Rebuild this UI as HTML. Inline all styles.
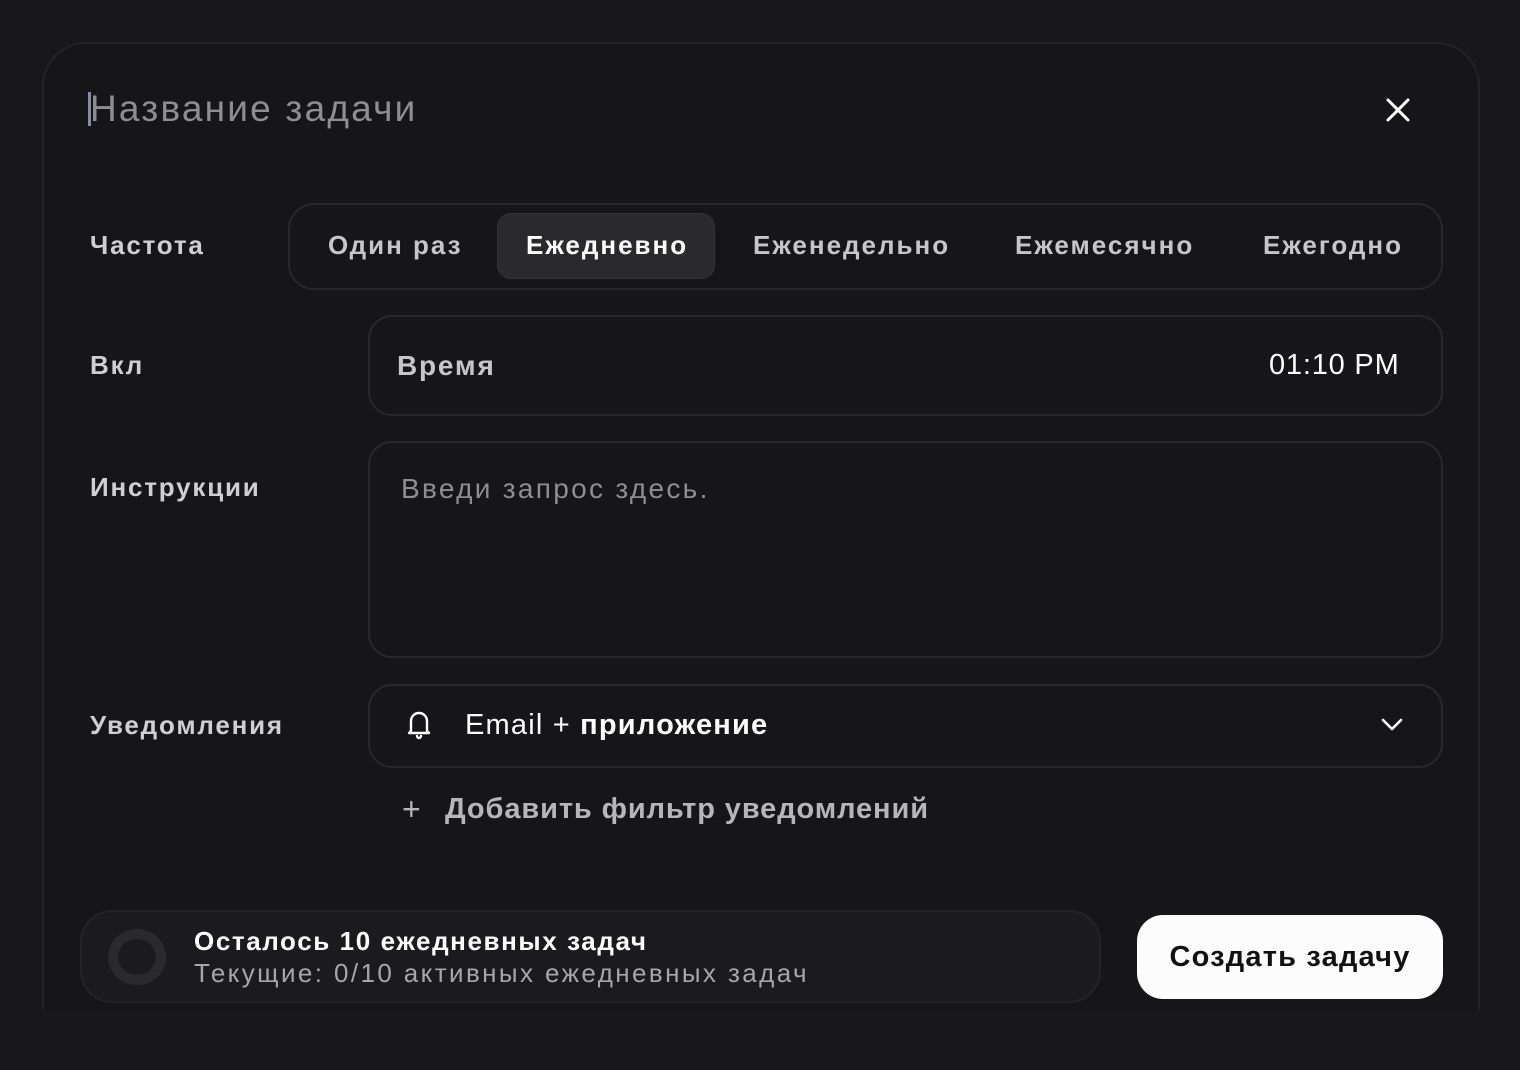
<!DOCTYPE html>
<html><head><meta charset="utf-8"><style>
*{margin:0;padding:0;box-sizing:border-box}
body{width:1520px;height:1070px;background:#18181a;font-family:"Liberation Sans","DejaVu Sans",sans-serif;position:relative;overflow:hidden;color:#e6e6e8}
.panel{position:absolute;left:42px;top:42px;width:1438px;height:1010px;background:#161618;border:2px solid #232326;border-radius:44px}
.clip{position:absolute;left:0;top:1010px;width:1520px;height:60px;background:#18181a}
.abs{position:absolute;white-space:nowrap}
.lbl{position:absolute;left:90px;font-size:26px;font-weight:bold;color:#cfcfd3;letter-spacing:1.8px}
.box{position:absolute;border:2px solid #28282b;border-radius:24px;background:#161618}
.tab{position:absolute;top:230px;font-size:26px;font-weight:bold;color:#c6c6ca;letter-spacing:2px}
</style></head><body>
<div class="panel"></div>
<div class="abs" style="left:88px;top:92px;width:3px;height:34px;background:#8a8aa0"></div>
<div class="abs" style="left:90px;top:88px;font-size:37px;color:#8e8e92;letter-spacing:2.2px">Название задачи</div>
<svg class="abs" style="left:1385px;top:97px" width="26" height="26" viewBox="0 0 26 26"><path d="M3 3L23 23M23 3L3 23" stroke="#fff" stroke-width="3" stroke-linecap="round"/></svg>

<div class="lbl" style="top:230px">Частота</div>
<div class="box" style="left:288px;top:203px;width:1155px;height:87px;border-radius:26px"></div>
<div class="abs" style="left:497px;top:213px;width:218px;height:66px;background:#2a2a2d;border:1px solid #333336;border-radius:14px"></div>
<div class="tab" style="left:328px">Один раз</div>
<div class="tab" style="left:526px;color:#fff">Ежедневно</div>
<div class="tab" style="left:753px">Еженедельно</div>
<div class="tab" style="left:1015px">Ежемесячно</div>
<div class="tab" style="left:1263px">Ежегодно</div>

<div class="lbl" style="top:350px">Вкл</div>
<div class="box" style="left:368px;top:315px;width:1075px;height:101px"></div>
<div class="abs" style="left:397px;top:350px;font-size:28px;font-weight:bold;color:#c6c6ca;letter-spacing:1.8px">Время</div>
<div class="abs" style="left:1269px;top:349px;font-size:29px;color:#fff;letter-spacing:0.8px">01:10 PM</div>

<div class="lbl" style="top:472px">Инструкции</div>
<div class="box" style="left:368px;top:441px;width:1075px;height:217px"></div>
<div class="abs" style="left:401px;top:473px;font-size:28px;color:#8e8e92;letter-spacing:2.3px">Введи запрос здесь.</div>

<div class="lbl" style="top:710px">Уведомления</div>
<div class="box" style="left:368px;top:684px;width:1075px;height:84px"></div>
<svg class="abs" style="left:402px;top:706px" width="34" height="34" viewBox="0 0 34 34" fill="none" stroke="#fff" stroke-width="2.4" stroke-linejoin="round"><path d="M9 25V15a8 8 0 0 1 16 0v10l2 2H7z"/><path d="M15 30a2 2 0 0 0 4 0" stroke-linecap="round"/></svg>
<div class="abs" style="left:465px;top:709px;font-size:29px;color:#fff;letter-spacing:1.2px">Email + <b>приложение</b></div>
<svg class="abs" style="left:1380px;top:716px" width="24" height="16" viewBox="0 0 24 16"><path d="M3 4l9 9 9-9" fill="none" stroke="#fff" stroke-width="2.6" stroke-linecap="round" stroke-linejoin="round"/></svg>
<div class="abs" style="left:402px;top:791px;font-size:32px;color:#b6b6ba">+</div>
<div class="abs" style="left:445px;top:793px;font-size:29px;font-weight:bold;color:#b6b6ba;letter-spacing:0.9px">Добавить фильтр уведомлений</div>

<div class="abs" style="left:80px;top:910px;width:1021px;height:93px;background:#1b1b1e;border:2px solid #242427;border-radius:32px"></div>
<div class="abs" style="left:108px;top:929px;width:58px;height:56px;border:10px solid #2a2a2d;border-radius:50%"></div>
<div class="abs" style="left:194px;top:926px;font-size:26px;font-weight:bold;color:#fff;letter-spacing:1.6px">Осталось 10 ежедневных задач</div>
<div class="abs" style="left:194px;top:958px;font-size:26px;color:#a6a6aa;letter-spacing:2.4px">Текущие: 0/10 активных ежедневных задач</div>
<div class="abs" style="left:1137px;top:915px;width:306px;height:84px;background:#fcfcfd;border-radius:26px;color:#111;font-size:29px;font-weight:bold;text-align:center;line-height:84px;letter-spacing:1.2px">Создать задачу</div>
<div class="clip"></div>
</body></html>
